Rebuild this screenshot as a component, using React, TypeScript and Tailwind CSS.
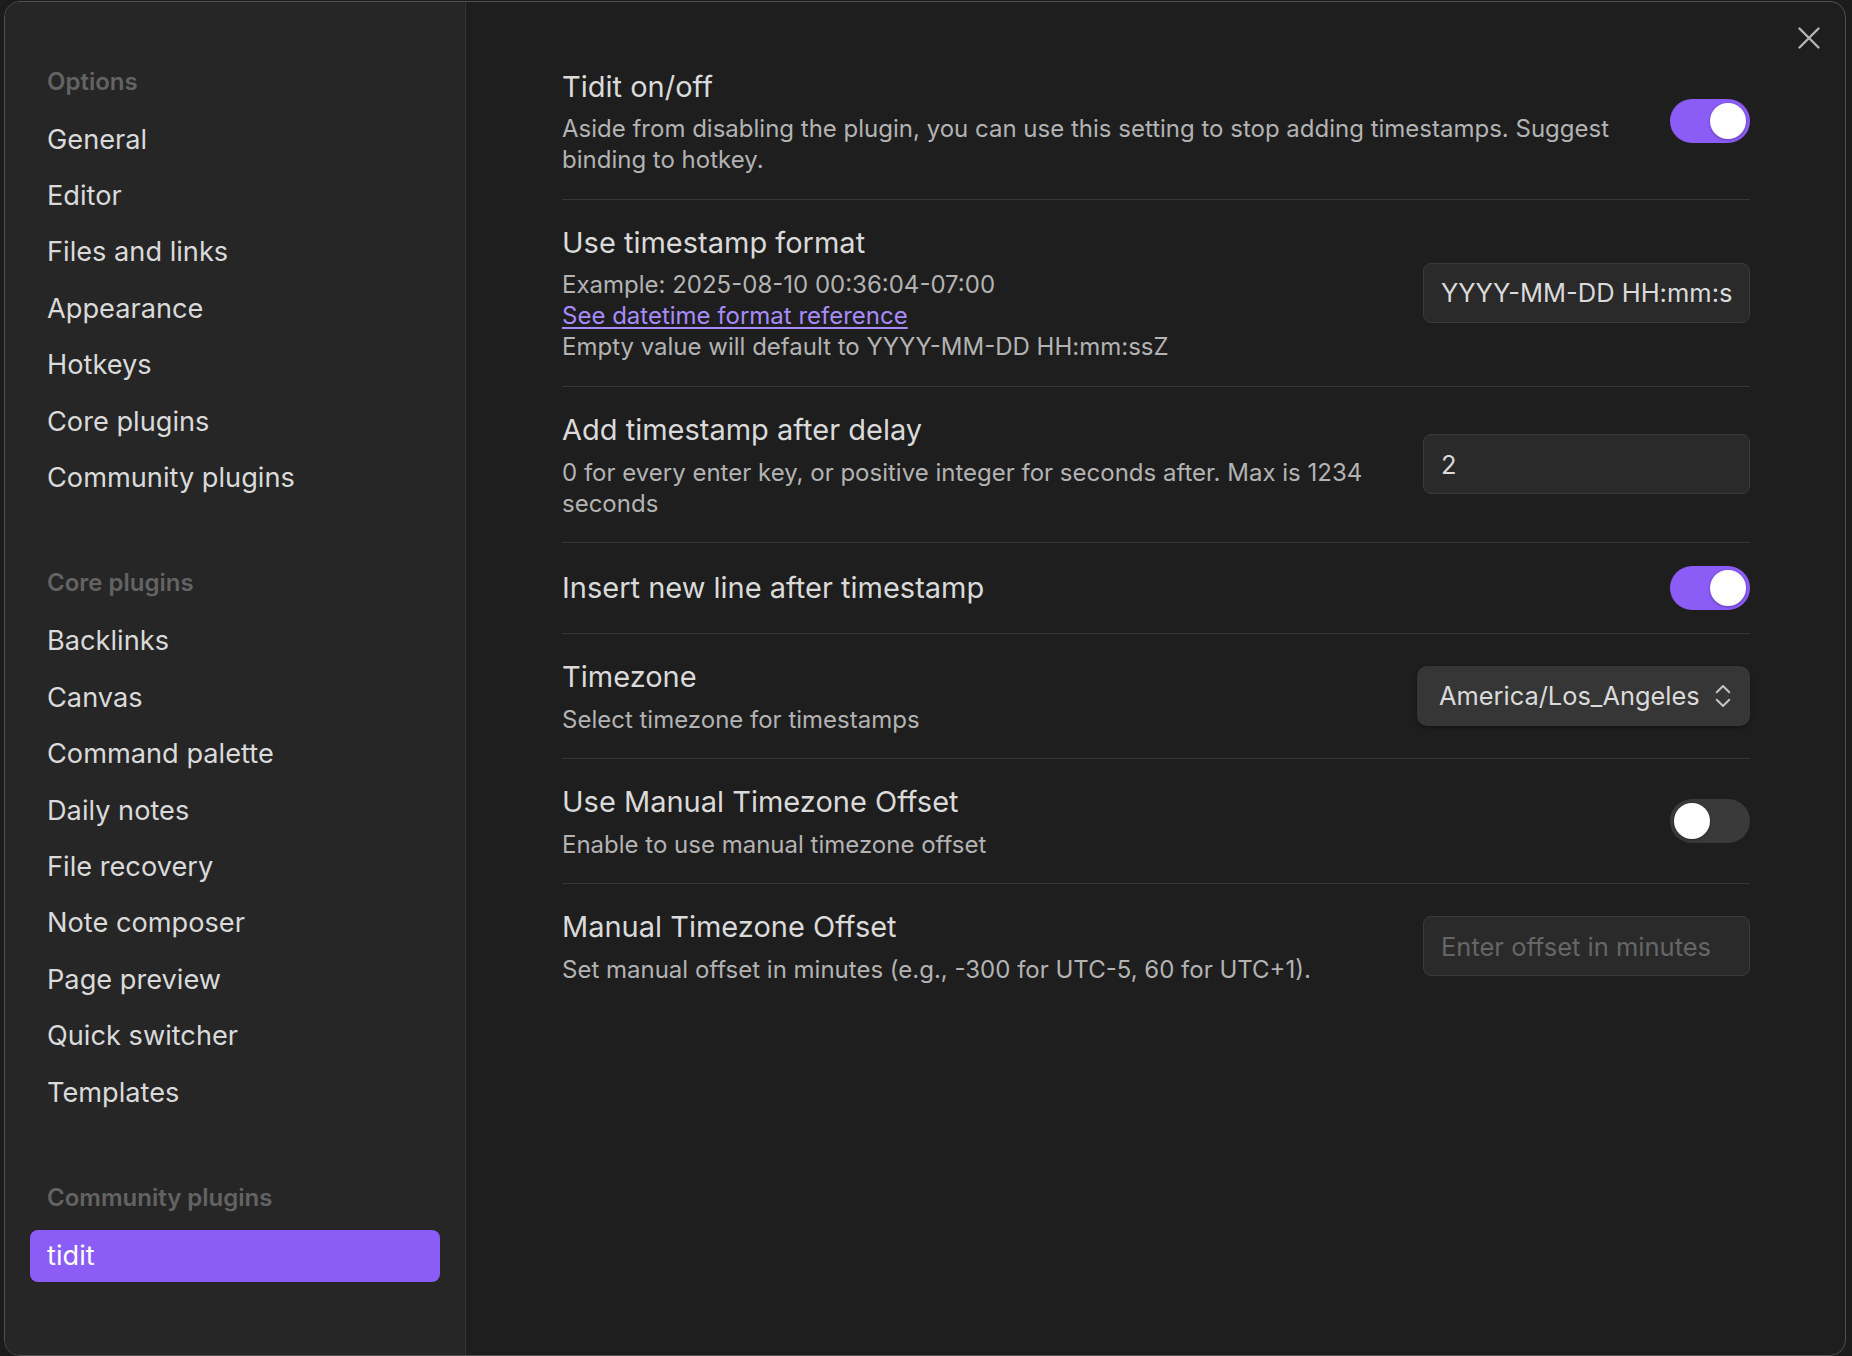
import { ChevronsUpDown } from 'lucide-react';
import type { ReactNode } from 'react';

const optionItems = ['General', 'Editor', 'Files and links', 'Appearance', 'Hotkeys', 'Core plugins', 'Community plugins'];
const coreItems = ['Backlinks', 'Canvas', 'Command palette', 'Daily notes', 'File recovery', 'Note composer', 'Page preview', 'Quick switcher', 'Templates'];

const NavGroup = ({ title, items, active, first }: { title: string; items: string[]; active?: string; first?: boolean }) => (
  <div className={first ? '' : 'mt-[60px]'}>
    <div className="h-[37px] mb-[14px] flex items-center pl-[17px] text-[24px] font-semibold text-[#636363]">{title}</div>
    <div className="flex flex-col gap-[4.44px]">
      {items.map((item) => (
        <div
          key={item}
          className={
            item === active
              ? 'h-[52px] flex items-center pl-[17px] rounded-[8px] bg-[#8b5cf6] text-[27.2px] text-white'
              : 'h-[52px] flex items-center pl-[17px] rounded-[8px] text-[27.2px] text-[#dadada]'
          }
        >
          {item}
        </div>
      ))}
    </div>
  </div>
);

const Toggle = ({ on }: { on?: boolean }) => (
  <div
    className={
      on
        ? 'w-[80px] h-[44px] rounded-full bg-[#8b5cf6] flex items-center justify-end px-[4px] shrink-0'
        : 'w-[80px] h-[44px] rounded-full bg-[#3a3a3a] flex items-center justify-start px-[4px] shrink-0'
    }
  >
    <div className="w-[36px] h-[36px] rounded-full bg-white shadow-[0_1px_3px_rgba(0,0,0,0.3)]" />
  </div>
);

const TextInput = ({ value, placeholder }: { value?: string; placeholder?: string }) => (
  <input
    readOnly
    value={value}
    placeholder={placeholder}
    className="w-[327px] h-[60px] shrink-0 rounded-[8px] border border-[#3a3a3a] bg-[#2a2a2a] px-[17px] text-[25.5px] text-[#dadada] placeholder:text-[#666666] outline-none"
  />
);

const Setting = ({ name, children, control, first }: { name: string; children?: ReactNode; control: ReactNode; first?: boolean }) => (
  <div className={first ? 'flex items-center py-[23.2px]' : 'flex items-center py-[23.2px] border-t border-[#363636]'}>
    <div className="flex-1 mr-[30px]">
      <div className="text-[29px] leading-[39px] text-[#dadada]">{name}</div>
      {children && <div className="mt-[7.7px] text-[24px] leading-[31px] text-[#b3b3b3]">{children}</div>}
    </div>
    {control}
  </div>
);

export default function App() {
  return (
    <div className="w-[1852px] h-[1356px] overflow-hidden bg-[#1c1c1c] pl-[4px] pt-[1px] pr-[6px] font-[Inter,sans-serif]">
      <div className="h-[1355px] flex rounded-[16px] border border-[#505050] bg-[#1e1e1e] overflow-hidden">
        {/* Sidebar */}
        <div className="w-[461px] shrink-0 bg-[#262626] border-r border-[#333333] pt-[61px] px-[25px]">
          <NavGroup title="Options" items={optionItems} first />
          <NavGroup title="Core plugins" items={coreItems} />
          <NavGroup title="Community plugins" items={['tidit']} active="tidit" />
        </div>

        {/* Contenido */}
        <div className="relative flex-1 pl-[96px] pr-[95px] pt-[41.5px]">
          <button className="absolute top-[25px] right-[25px] w-[22px] h-[22px] text-[#b5b5b5]">
            <svg width="22" height="22" viewBox="0 0 22 22" fill="none" stroke="currentColor" strokeWidth="2.4" strokeLinecap="round">
              <path d="M1.5 1.5 20.5 20.5M20.5 1.5 1.5 20.5" />
            </svg>
          </button>

          <Setting name="Tidit on/off" control={<Toggle on />} first>
            Aside from disabling the plugin, you can use this setting to stop adding timestamps. Suggest binding to hotkey.
          </Setting>

          <Setting name="Use timestamp format" control={<TextInput value="YYYY-MM-DD HH:mm:ssZ" />}>
            <div>Example: 2025-08-10 00:36:04-07:00</div>
            <div>
              <a href="#" className="text-[#a88bfa] underline underline-offset-[3px]">
                See datetime format reference
              </a>
            </div>
            <div>Empty value will default to YYYY-MM-DD HH:mm:ssZ</div>
          </Setting>

          <Setting name="Add timestamp after delay" control={<TextInput value="2" />}>
            0 for every enter key, or positive integer for seconds after. Max is 1234 seconds
          </Setting>

          <Setting name="Insert new line after timestamp" control={<Toggle on />} />

          <Setting
            name="Timezone"
            control={
              <div className="w-[333px] h-[60px] shrink-0 rounded-[10px] bg-[#363636] shadow-[0_2px_4px_rgba(0,0,0,0.35)] pl-[22px] pr-[12px] flex items-center justify-between text-[25.4px] text-[#dadada]">
                <span>America/Los_Angeles</span>
                <ChevronsUpDown size={30} strokeWidth={1.6} className="text-[#c4c4c4]" />
              </div>
            }
          >
            Select timezone for timestamps
          </Setting>

          <Setting name="Use Manual Timezone Offset" control={<Toggle />}>
            Enable to use manual timezone offset
          </Setting>

          <Setting name="Manual Timezone Offset" control={<TextInput placeholder="Enter offset in minutes" />}>
            Set manual offset in minutes (e.g., -300 for UTC-5, 60 for UTC+1).
          </Setting>
        </div>
      </div>
    </div>
  );
}
